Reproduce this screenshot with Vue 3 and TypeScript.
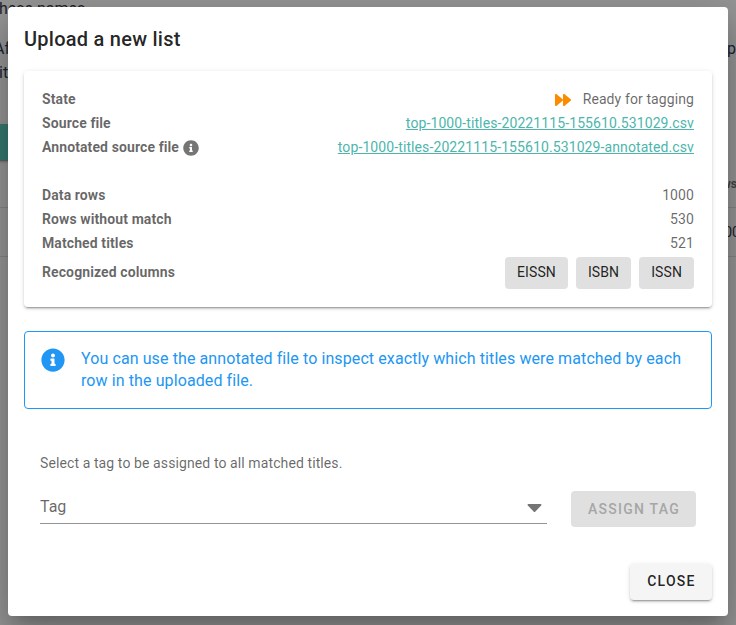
<script setup lang="ts">
interface Row {
  label: string
  value: string
  kind?: 'state' | 'link' | 'group'
  info?: boolean
}

const rows: Row[] = [
  { label: 'State', value: 'Ready for tagging', kind: 'state' },
  { label: 'Source file', value: 'top-1000-titles-20221115-155610.531029.csv', kind: 'link' },
  { label: 'Annotated source file', value: 'top-1000-titles-20221115-155610.531029-annotated.csv', kind: 'link', info: true },
  { label: 'Data rows', value: '1000', kind: 'group' },
  { label: 'Rows without match', value: '530' },
  { label: 'Matched titles', value: '521' },
]

const columns: string[] = ['EISSN', 'ISBN', 'ISSN']

const infoPath =
  'M256 8C119.043 8 8 119.083 8 256c0 136.997 111.043 248 248 248s248-111.003 248-248C504 119.083 392.957 8 256 8zm0 110c23.196 0 42 18.804 42 42s-18.804 42-42 42-42-18.804-42-42 18.804-42 42-42zm56 254c0 6.627-5.373 12-12 12h-88c-6.627 0-12-5.373-12-12v-24c0-6.627 5.373-12 12-12h12v-64h-12c-6.627 0-12-5.373-12-12v-24c0-6.627 5.373-12 12-12h64c6.627 0 12 5.373 12 12v100h12c6.627 0 12 5.373 12 12v24z'
const forwardPath =
  'M500.5 231.4l-192-160C287.9 54.3 256 68.6 256 96v320c0 27.4 31.9 41.8 52.5 24.6l192-160c15.3-12.8 15.3-36.4 0-49.2zm-256 0l-192-160C31.9 54.3 0 68.6 0 96v320c0 27.4 31.9 41.8 52.5 24.6l192-160c15.3-12.8 15.3-36.4 0-49.2z'
const caretPath =
  'M31.3 192h257.3c17.8 0 26.7 21.5 14.1 34.1L174.1 354.7c-7.8 7.8-20.5 7.8-28.3 0L17.2 226.1C4.6 213.5 13.5 192 31.3 192z'
</script>

<template>
  <div class="screen">
    <div class="page" aria-hidden="true">
      <span class="under names">hese names.</span>
      <span class="under after">Af</span>
      <span class="under it">it</span>
      <span class="under para">p</span>
      <span class="page-btn"></span>
      <div class="page-table">
        <div class="page-head"><span>ws</span></div>
        <div class="page-row"><span>00</span></div>
      </div>
    </div>

    <div class="dialog" role="dialog">
      <h1 class="title">Upload a new list</h1>

      <section class="card">
        <div v-for="row in rows" :key="row.label" class="row" :class="row.kind">
          <span class="label">
            {{ row.label }}
            <svg v-if="row.info" class="hint" viewBox="0 0 512 512"><path :d="infoPath" /></svg>
          </span>
          <a v-if="row.kind === 'link'" class="file">{{ row.value }}</a>
          <span v-else class="value">
            <svg v-if="row.kind === 'state'" class="forward" viewBox="0 0 512 512"><path :d="forwardPath" /></svg>
            <span>{{ row.value }}</span>
          </span>
        </div>
        <div class="row chips-row">
          <span class="label">Recognized columns</span>
          <span class="chips">
            <span v-for="c in columns" :key="c" class="chip">{{ c }}</span>
          </span>
        </div>
      </section>

      <div class="alert">
        <svg class="alert-icon" viewBox="0 0 512 512"><path :d="infoPath" /></svg>
        <p>You can use the annotated file to inspect exactly which titles were matched by each row in the uploaded file.</p>
      </div>

      <section class="assign">
        <p class="prompt">Select a tag to be assigned to all matched titles.</p>
        <div class="controls">
          <div class="select">
            <span>Tag</span>
            <svg class="caret" viewBox="0 0 320 512"><path :d="caretPath" /></svg>
          </div>
          <button class="btn disabled" disabled>Assign tag</button>
        </div>
      </section>

      <footer class="actions">
        <button class="btn close">Close</button>
      </footer>
    </div>
  </div>
</template>

<style>
body {
  overflow: hidden;
}
</style>

<style scoped>
* {
  box-sizing: border-box;
}
.screen {
  position: relative;
  width: 736px;
  height: 625px;
  overflow: hidden;
  padding: 7px 8px 9px;
  background: #969696;
  font-family: Roboto, sans-serif;
  font-size: 14px;
  color: rgba(0, 0, 0, 0.6);
}
.page {
  position: absolute;
  inset: 0;
  color: #1f2229;
}
.under {
  position: absolute;
  font-size: 16px;
  line-height: 24px;
}
.names { left: -1px; top: -3px; }
.after { left: -6px; top: 37px; color: #1c2433; }
.it { left: -1px; top: 61px; color: #1c2433; }
.para { left: 727px; top: 37px; color: #1c2433; }
.page-btn {
  position: absolute;
  left: -20px;
  top: 124px;
  width: 60px;
  height: 36px;
  background: #367a71;
  box-shadow: 0 3px 1px -2px rgba(0, 0, 0, 0.2), 0 2px 2px rgba(0, 0, 0, 0.14), 0 1px 5px rgba(0, 0, 0, 0.12);
}
.page-table {
  position: absolute;
  left: 0;
  top: 160px;
  width: 745px;
}
.page-head,
.page-row {
  display: flex;
  align-items: center;
  justify-content: flex-end;
  border-bottom: 1px solid #858585;
}
.page-head {
  height: 48px;
  padding-right: 8px;
  font-size: 12px;
  font-weight: 700;
  color: #444;
}
.page-row {
  height: 49px;
  padding-right: 5px;
}
.dialog {
  position: relative;
  display: flex;
  flex-direction: column;
  width: 720px;
  height: 609px;
  padding: 16px;
  border-radius: 4px;
  background: #fff;
  box-shadow: 0 11px 15px -7px rgba(0, 0, 0, 0.2), 0 24px 38px 3px rgba(0, 0, 0, 0.14), 0 9px 46px 8px rgba(0, 0, 0, 0.12);
}
.title {
  margin: 0 0 16px;
  font-size: 20px;
  font-weight: 500;
  line-height: 32px;
  letter-spacing: 0.25px;
  color: rgba(0, 0, 0, 0.87);
}
.card {
  height: 236px;
  padding: 16px 18px;
  border-radius: 4px;
  box-shadow: 0 3px 1px -2px rgba(0, 0, 0, 0.2), 0 2px 2px rgba(0, 0, 0, 0.14), 0 1px 5px rgba(0, 0, 0, 0.12);
}
.row {
  display: flex;
  align-items: center;
  justify-content: space-between;
  height: 24px;
  letter-spacing: 0.1px;
}
.group {
  margin-top: 24px;
}
.label {
  display: flex;
  align-items: center;
  gap: 3.7px;
  font-weight: 700;
}
svg {
  display: block;
  flex: none;
  fill: currentColor;
}
.hint {
  width: 16px;
  height: 16px;
  margin-top: 1px;
  color: #757575;
}
.value {
  display: flex;
  align-items: center;
  gap: 12px;
}
.forward {
  width: 16px;
  height: 16px;
  margin-top: 2px;
  color: #fb8c00;
}
.file {
  color: #4db6ac;
  text-decoration: underline;
}
.chips-row {
  height: 32px;
  margin-top: 2px;
}
.chips-row .label {
  margin-top: -2px;
}
.chips {
  display: flex;
  gap: 8px;
}
.chip {
  height: 32px;
  padding: 0 12px;
  border-radius: 4px;
  line-height: 31px;
  background: #e0e0e0;
  color: rgba(0, 0, 0, 0.87);
}
.alert {
  display: flex;
  gap: 16px;
  height: 78px;
  margin-top: 24px;
  padding: 16px;
  border: 1px solid #2196f3;
  border-radius: 4px;
  color: #2196f3;
}
.alert-icon {
  width: 24px;
  height: 24px;
  margin-left: -0.5px;
  margin-right: 0.5px;
}
.alert p {
  margin: 0;
  font-size: 16px;
  line-height: 22px;
  letter-spacing: 0.1px;
}
.assign {
  padding: 43px 16px 0;
}
.prompt {
  margin: 0;
  line-height: 22px;
  letter-spacing: 0.1px;
}
.controls {
  display: flex;
  gap: 24px;
  margin-top: 17px;
}
.select {
  display: flex;
  flex: 1;
  align-items: center;
  justify-content: space-between;
  height: 33px;
  padding-right: 5px;
  padding-bottom: 1px;
  border-bottom: 1px solid #949494;
  font-size: 16px;
}
.caret {
  width: 15px;
  height: 24px;
  color: #757575;
}
.btn {
  height: 36px;
  padding: 0;
  border: 0;
  border-radius: 4px;
  font-family: inherit;
  font-size: 14px;
  font-weight: 500;
  letter-spacing: 1.25px;
  text-transform: uppercase;
}
.disabled {
  width: 125px;
  padding-left: 1px;
  background: #e0e0e0;
  color: #a6a6a6;
}
.actions {
  display: flex;
  justify-content: flex-end;
  margin-top: auto;
}
.close {
  width: 82px;
  padding: 0 0 2px 1px;
  background: #f5f5f5;
  color: rgba(0, 0, 0, 0.87);
  box-shadow: 0 3px 1px -2px rgba(0, 0, 0, 0.2), 0 2px 2px rgba(0, 0, 0, 0.14), 0 1px 5px rgba(0, 0, 0, 0.12);
}
</style>
